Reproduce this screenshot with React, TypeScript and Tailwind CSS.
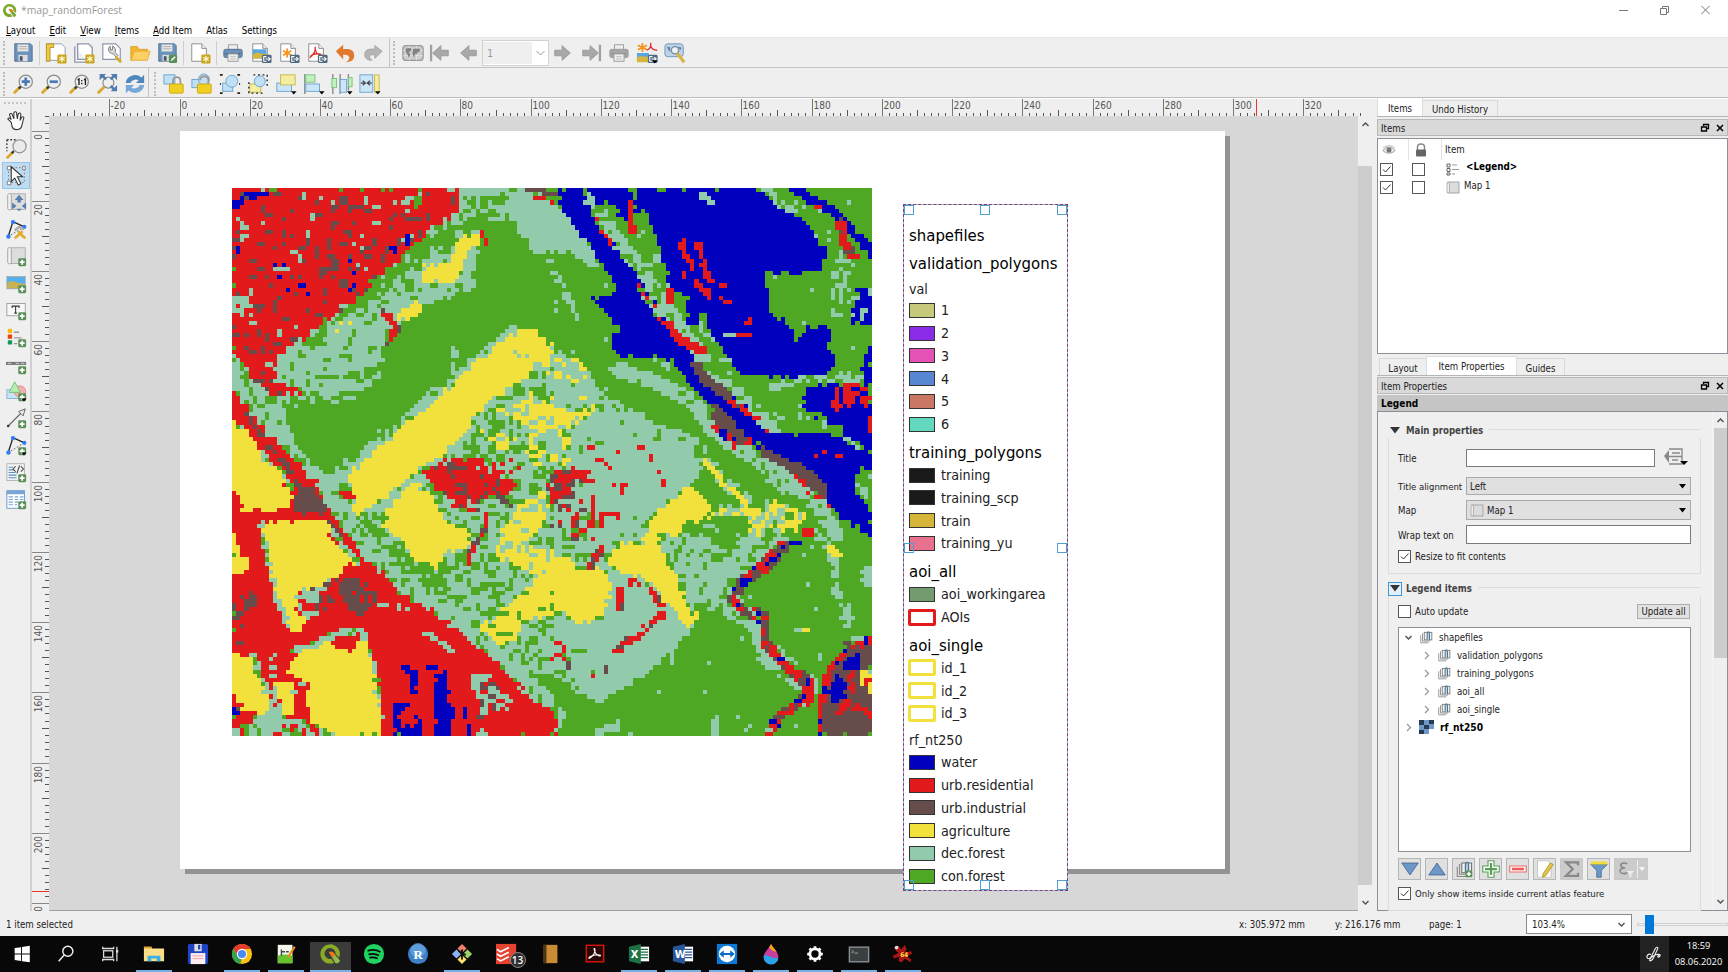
import React, { useMemo } from "react";
import type { ReactNode } from "react";

/* ---------- land cover raster ---------- */

const COLS = 155;
const ROWS = 132;
const CELL_X = 1920 / COLS;
const CELL_Y = 1535 / ROWS;

const COVER: Record<string, string> = {
  b: "#0000be",
  r: "#e31a1c",
  i: "#664d4b",
  y: "#f2e03d",
  d: "#92cbab",
  g: "#4ea823",
};

// [kind, x offset, class mix, points, line width]
type Region = ["area" | "line", number, string, number[], number?];

const E = 975;
const REGIONS: Region[] = [
  // north-west
  ["area", 0, "dddddgd", [21, 470, 150, 480, 480, 320, 640, 120, 700, 22, 850, 22, 850, 60, 780, 140, 745, 310, 600, 350, 470, 440, 470, 520, 400, 560, 360, 610, 270, 590, 230, 620, 170, 630, 210, 720, 250, 840, 300, 860, 280, 880, 200, 800, 100, 690, 21, 570]],
  ["area", 0, "ggggggd", [430, 290, 560, 190, 650, 130, 740, 110, 790, 130, 700, 170, 620, 200, 580, 250, 520, 260, 440, 340]],
  ["area", 0, "gggd", [720, 40, 835, 40, 850, 90, 780, 150, 740, 90]],
  ["line", 0, "gggd", [270, 548, 360, 548, 420, 540], 14],
  ["line", 0, "gd", [470, 350, 540, 290, 600, 300], 24],
  ["line", 0, "gggd", [230, 470, 320, 400, 390, 350], 16],
  ["area", 0, "g", [850, 100, 890, 140, 970, 250, 1010, 430, 960, 440, 900, 400, 800, 470, 700, 560, 600, 590, 540, 640, 400, 730, 330, 790, 260, 820, 200, 720, 170, 620, 350, 610, 480, 500, 590, 370, 740, 320, 760, 140]],
  ["line", 0, "dddg", [690, 470, 680, 550], 18],
  ["line", 0, "ddg", [740, 260, 720, 300, 640, 330], 14],
  ["line", 0, "gggd", [190, 620, 350, 620, 470, 540], 26],
  ["area", 0, "rrrrrrrrrrrrrrrrriird", [21, 22, 705, 22, 695, 90, 640, 125, 560, 190, 500, 240, 430, 300, 380, 350, 300, 400, 220, 455, 155, 490, 150, 570, 220, 585, 215, 600, 140, 600, 75, 560, 60, 520, 21, 490]],
  ["area", 0, "rrrrrri", [340, 60, 400, 60, 380, 220, 300, 260, 230, 240]],
  ["area", 0, "rrrrrrib", [200, 260, 420, 240, 400, 320, 240, 330, 130, 280]],
  ["area", 0, "rrrrrddi", [21, 100, 60, 110, 70, 170, 21, 180]],
  ["area", 0, "dddr", [21, 320, 80, 330, 80, 375, 21, 370]],
  ["line", 0, "i", [320, 210, 340, 240, 290, 255], 18],
  ["line", 0, "b", [21, 75, 70, 45, 120, 40], 16],
  ["line", 0, "i", [50, 40, 65, 50], 14],
  ["line", 0, "b", [345, 228, 370, 228], 9],
  ["line", 0, "b", [495, 190, 515, 200], 12],
  ["line", 0, "b", [550, 155, 550, 175], 10],
  ["line", 0, "b", [40, 190, 40, 210], 10],
  ["line", 0, "b", [148, 240, 172, 240], 9],
  ["line", 0, "b", [222, 298, 245, 298], 9],
  ["area", 0, "dddgr", [515, 60, 590, 40, 590, 70, 540, 85]],
  ["area", 0, "y", [690, 165, 765, 150, 765, 185, 722, 200, 715, 250, 690, 285, 640, 290, 582, 285, 600, 240, 680, 225, 690, 190]],
  ["area", 0, "y", [515, 385, 570, 340, 605, 345, 550, 397]],
  ["area", 0, "yyd", [320, 405, 380, 395, 350, 430]],
  ["line", 0, "rrri", [480, 370, 520, 410, 485, 460], 18],
  ["line", 0, "r", [772, 145, 785, 180], 12],
  // north-centre
  ["area", 0, "d", [835, 22, 910, 22, 975, 60, 1060, 130, 1115, 220, 1130, 265, 1060, 210, 980, 200, 930, 210, 880, 140, 850, 100]],
  ["line", 0, "r", [935, 50, 980, 60], 14],
  ["line", 0, "i", [905, 24, 995, 40], 14],
  ["line", E, "dddg", [0, 230, 60, 340, 85, 380], 20],
  // central mixed ground
  ["area", 0, "dddgg", [280, 850, 380, 780, 590, 800, 740, 660, 860, 580, 960, 480, 1060, 500, 1180, 620, 1300, 680, 1300, 950, 1350, 1350, 1100, 1440, 870, 1360, 700, 1270, 600, 1190, 520, 1130, 400, 1020, 320, 930]],
  ["line", 0, "dddg", [860, 425, 740, 520, 610, 615, 500, 710, 390, 790, 340, 890], 34],
  ["line", 0, "ddddg", [740, 700, 610, 830, 480, 900, 400, 960], 36],
  ["area", 0, "y", [910, 408, 985, 470, 1000, 530, 930, 510, 900, 560, 840, 590, 740, 660, 740, 690, 650, 775, 585, 810, 480, 885, 420, 925, 390, 955, 370, 940, 395, 890, 368, 830, 410, 795, 540, 685, 620, 625, 730, 535, 800, 480, 830, 445]],
  ["area", 0, "dy", [830, 480, 930, 480, 900, 500]],
  ["area", 0, "gggd", [380, 960, 440, 940, 480, 1000, 545, 1010, 560, 1080, 660, 1090, 670, 1150, 560, 1150, 470, 1100, 410, 1030]],
  ["area", 0, "y", [500, 900, 560, 850, 600, 865, 650, 930, 660, 960, 740, 990, 725, 1030, 660, 1045, 640, 1090, 600, 1070, 555, 1060, 540, 1010, 470, 970]],
  ["area", 0, "rrrrrrri", [580, 818, 670, 785, 780, 785, 790, 820, 870, 830, 870, 870, 820, 890, 740, 900, 720, 915, 660, 890, 625, 850]],
  ["area", 0, "ddddr", [720, 800, 870, 780, 880, 825, 790, 815]],
  ["line", 0, "ii", [670, 800, 715, 810], 20],
  ["line", 0, "i", [800, 860, 820, 885, 860, 910], 14],
  ["line", 0, "ir", [690, 912, 760, 925], 12],
  ["line", 0, "ir", [790, 920, 780, 980, 750, 1020, 730, 1070], 14],
  ["line", 0, "r", [325, 885, 380, 885], 22],
  ["area", 0, "yyyyd", [865, 920, 960, 860, 965, 940, 910, 1020, 990, 1040, 990, 1090, 930, 1110, 850, 1070, 805, 1040]],
  ["area", 0, "yyyyyyyyg", [905, 1140, 1000, 1080, 1000, 1215, 900, 1230, 870, 1290, 800, 1310, 745, 1290, 760, 1250, 840, 1200]],
  ["area", 0, "yyyd", [820, 650, 920, 600, 990, 640, 1140, 650, 1120, 688, 1000, 690, 880, 685]],
  ["area", 0, "yydgg", [760, 700, 870, 710, 850, 760, 800, 740]],
  ["area", 0, "ydgd", [900, 690, 1040, 690, 1040, 790, 900, 800]],
  ["area", E, "dddddgy", [0, 470, 100, 510, 180, 620, 160, 640, 0, 630]],
  ["area", E, "ddddddddddddddddddg", [160, 645, 230, 640, 320, 680, 440, 720, 460, 780, 430, 850, 340, 910, 280, 970, 220, 1020, 160, 1050, 60, 1040, 40, 950, 60, 690]],
  ["area", E, "ddddddddddddddrdddddr", [100, 740, 380, 730, 340, 880, 120, 980]],
  ["area", E, "rrri", [0, 815, 60, 805, 125, 820, 110, 845, 50, 850, 80, 890, 0, 900]],
  ["area", E, "dddrrig", [0, 890, 110, 900, 190, 940, 120, 1005, 0, 1010]],
  ["area", E, "y", [0, 1055, 60, 1060, 80, 1090, 160, 1090, 190, 1140, 165, 1200, 130, 1230, 100, 1250, 75, 1250, 70, 1220, 0, 1200]],
  ["area", E, "d", [200, 1100, 260, 1105, 350, 1170, 430, 1240, 420, 1270, 350, 1330, 240, 1410, 150, 1460, 80, 1430, 50, 1380, 10, 1300, 20, 1220, 70, 1240, 150, 1240]],
  ["area", E, "ddddgri", [0, 1270, 100, 1310, 190, 1360, 130, 1390, 40, 1370, 0, 1340]],
  ["area", E, "dddg", [340, 990, 640, 990, 640, 1060, 540, 1140, 530, 1200, 430, 1200, 380, 1100, 330, 1040]],
  ["area", E, "gggd", [460, 960, 560, 1000, 540, 1060, 470, 1050]],
  ["area", E, "y", [400, 855, 440, 870, 480, 910, 485, 940, 450, 960, 410, 945, 380, 1000, 330, 980, 335, 1050, 380, 1110, 400, 1160, 420, 1210, 460, 1215, 415, 1255, 390, 1230, 320, 1140, 270, 1110, 200, 1100, 165, 1060, 225, 1010, 280, 1030, 290, 970, 340, 910, 390, 890]],
  ["area", E, "g", [440, 720, 620, 780, 780, 900, 700, 890, 600, 880, 530, 840, 470, 790]],
  ["line", E, "dddg", [450, 760, 520, 840, 590, 895], 34],
  ["line", E, "y", [465, 785, 520, 850, 595, 905], 14],
  ["area", E, "yyyddg", [500, 915, 600, 910, 690, 900, 780, 940, 740, 985, 600, 990, 590, 940, 510, 945]],
  ["line", E, "rrri", [215, 1145, 210, 1190], 22],
  ["line", E, "r", [240, 1125, 270, 1130], 12],
  ["line", E, "rrri", [305, 1150, 345, 1205], 20],
  ["line", E, "rrrrid", [345, 1205, 280, 1260, 200, 1315], 24],
  ["line", E, "ri", [120, 1080, 155, 1035], 24],
  // river banks and river
  ["line", E, "dddg", [90, 22, 180, 150, 270, 260, 370, 400, 450, 500], 60],
  ["line", E, "dddddg", [200, 530, 330, 570, 430, 620, 490, 700, 600, 770, 700, 830, 800, 910, 860, 990], 44],
  ["area", E, "dddddg", [640, 780, 700, 790, 790, 900, 760, 900, 640, 840]],
  ["line", E, "dddg", [480, 560, 560, 600, 670, 700], 40],
  ["area", E, "b", [18, 22, 80, 22, 130, 90, 200, 190, 300, 330, 380, 430, 450, 530, 560, 610, 660, 710, 760, 710, 860, 715, 930, 750, 920, 870, 966, 920, 966, 1000, 880, 950, 820, 880, 740, 800, 640, 750, 560, 720, 480, 640, 410, 560, 370, 510, 320, 500, 200, 495, 180, 450, 210, 410, 140, 350, 130, 325, 195, 330, 190, 290, 110, 170, 30, 80]],
  ["area", E, "dddg", [300, 495, 340, 490, 370, 530, 320, 525]],
  ["line", E, "i", [440, 520, 470, 560, 540, 605], 28],
  ["area", E, "i", [485, 635, 530, 640, 560, 690, 610, 745, 560, 730, 500, 690]],
  ["line", E, "i", [640, 760, 720, 800], 24],
  ["area", E, "i", [700, 780, 760, 800, 830, 860, 830, 900, 770, 850, 730, 830]],
  ["line", E, "rri", [545, 620, 600, 660], 16],
  ["line", E, "rrd", [600, 655, 655, 700], 14],
  ["line", E, "rrib", [490, 690, 560, 740, 600, 735], 20],
  ["line", E, "rrd", [740, 830, 800, 890, 835, 910], 14],
  ["line", E, "rg", [125, 90, 180, 175], 14],
  ["line", E, "rdg", [265, 300, 330, 380], 16],
  // lake
  ["area", E, "b", [110, 22, 245, 22, 240, 110, 200, 100, 200, 62, 150, 62]],
  ["area", E, "b", [250, 22, 655, 22, 700, 80, 770, 105, 790, 160, 830, 190, 820, 250, 740, 265, 620, 260, 660, 310, 660, 370, 710, 400, 740, 450, 780, 410, 840, 410, 830, 460, 860, 520, 800, 545, 660, 550, 550, 530, 530, 480, 480, 430, 410, 400, 410, 330, 350, 290, 340, 200, 310, 140, 290, 80, 255, 90]],
  ["area", E, "gggd", [260, 110, 300, 150, 340, 210, 330, 250, 260, 190]],
  ["line", E, "ddg", [650, 30, 710, 75, 760, 80], 26],
  ["line", E, "d", [455, 45, 490, 65], 18],
  ["line", E, "r", [400, 175, 400, 205], 22],
  ["line", E, "r", [440, 180, 455, 205], 18],
  ["line", E, "rrb", [410, 215, 430, 240, 405, 268], 16],
  ["line", E, "r", [460, 238, 475, 275], 22],
  ["line", E, "rrb", [440, 290, 475, 320], 20],
  ["line", E, "rrb", [485, 285, 545, 310], 14],
  ["line", E, "r", [515, 332, 540, 345], 14],
  ["line", E, "rrb", [605, 388, 590, 405], 18],
  ["line", E, "rr", [560, 430, 605, 440], 16],
  ["line", E, "d", [530, 435, 548, 430], 16],
  ["line", E, "rrrd", [355, 300, 355, 340], 26],
  ["line", E, "r", [350, 400, 395, 450, 465, 480], 26],
  ["line", E, "r", [240, 70, 248, 140], 18],
  ["line", E, "ggd", [455, 380, 470, 440, 530, 510], 26],
  ["line", E, "b", [735, 25, 850, 90, 966, 200], 26],
  ["area", E, "gggd", [760, 110, 740, 80, 850, 110, 870, 180, 820, 190]],
  ["line", E, "rrri", [875, 125, 880, 170, 910, 215], 30],
  ["line", E, "r", [790, 68, 815, 78], 12],
  ["area", E, "ddgg", [840, 240, 870, 200, 920, 230, 880, 300, 880, 380, 850, 370]],
  ["area", E, "bbbbbd", [905, 305, 966, 300, 966, 405, 905, 400]],
  ["line", E, "dg", [880, 280, 920, 330, 850, 380], 22],
  ["area", E, "b", [945, 480, 966, 470, 966, 600, 930, 560]],
  ["line", E, "dddg", [670, 580, 780, 555, 930, 555], 26],
  ["area", E, "b", [765, 590, 860, 570, 966, 580, 966, 860, 925, 860, 920, 760, 870, 690, 760, 640]],
  ["area", E, "gggggd", [680, 640, 760, 655, 870, 690, 860, 715, 760, 705, 700, 715]],
  ["line", E, "dddg", [880, 720, 925, 745], 18],
  ["area", E, "rrrrb", [845, 590, 890, 562, 966, 585, 966, 640, 930, 615, 880, 640, 850, 640]],
  ["area", E, "r", [935, 680, 966, 655, 966, 705]],
  ["area", E, "bbbbbrbb", [770, 740, 850, 740, 890, 800, 800, 790]],
  ["area", E, "gggd", [922, 800, 966, 820, 966, 890, 922, 885]],
  // east
  ["line", E, "r", [765, 990, 800, 985], 24],
  ["line", E, "ddg", [800, 990, 850, 1050, 850, 1130, 900, 1230, 925, 1290], 26],
  ["line", E, "yyd", [835, 1030, 870, 1050], 20],
  ["area", E, "d", [935, 1080, 966, 1080, 966, 1145, 935, 1140]],
  ["line", E, "dddg", [690, 1020, 560, 1115, 540, 1190, 630, 1260, 640, 1330, 780, 1420], 54],
  ["line", E, "iiirrrb", [705, 1025, 640, 1085, 570, 1130, 550, 1180, 590, 1205, 640, 1225, 650, 1300, 720, 1365, 775, 1410, 765, 1460], 34],
  ["line", E, "rrribd", [760, 1460, 700, 1490, 655, 1550], 30],
  ["line", E, "r", [790, 1400, 790, 1460], 12],
  ["line", E, "dg", [560, 1160, 620, 1225], 10],
  ["line", E, "gd", [680, 1310, 750, 1370], 10],
  ["line", E, "b", [720, 1018, 745, 1018], 12],
  ["area", E, "i", [808, 1450, 850, 1360, 890, 1300, 966, 1290, 966, 1557, 808, 1557]],
  ["area", E, "ryyd", [925, 1370, 966, 1360, 966, 1430, 925, 1425]],
  ["area", E, "b", [820, 1430, 860, 1385, 895, 1400, 890, 1445, 860, 1465]],
  ["area", E, "b", [895, 1325, 925, 1330, 925, 1378, 870, 1372]],
  ["line", E, "rrrrib", [813, 1557, 815, 1450, 840, 1365, 900, 1310, 966, 1290], 18],
  ["line", E, "rrri", [905, 1380, 905, 1440, 870, 1490], 22],
  ["line", E, "rri", [920, 1480, 966, 1500], 22],
  ["line", E, "d", [150, 1545, 200, 1530], 24],
  ["line", E, "d", [497, 1510, 497, 1557], 22],
  ["line", E, "yyd", [740, 1260, 770, 1262], 12],
  // south-west
  ["line", 0, "ddddg", [30, 560, 110, 660, 230, 800, 330, 900, 420, 1020, 540, 1130, 650, 1200, 790, 1310, 900, 1400, 1000, 1510], 56],
  ["area", 0, "r", [21, 580, 100, 680, 270, 845, 330, 950, 420, 1060, 520, 1150, 640, 1220, 780, 1320, 900, 1430, 1000, 1510, 1000, 1557, 21, 1557]],
  ["line", 0, "ddgr", [40, 690, 110, 770, 200, 860], 18],
  ["area", 0, "y", [21, 665, 60, 700, 110, 775, 150, 810, 190, 860, 205, 910, 140, 925, 60, 930, 40, 880, 21, 850]],
  ["line", 0, "iir", [50, 640, 120, 730, 200, 820, 230, 880], 14],
  ["area", 0, "iiiiiir", [210, 850, 265, 865, 300, 910, 290, 938, 210, 935]],
  ["line", 0, "iir", [290, 930, 330, 980, 380, 1040], 14],
  ["line", 0, "dddg", [110, 960, 160, 1180, 200, 1260], 20],
  ["line", 0, "dddg", [320, 980, 395, 1070], 18],
  ["area", 0, "y", [110, 960, 300, 948, 320, 1000, 385, 1070, 350, 1100, 270, 1140, 240, 1170, 180, 1200, 155, 1150, 130, 1040]],
  ["area", 0, "y", [21, 990, 75, 1080, 60, 1100, 21, 1100]],
  ["area", 0, "dddri", [215, 1160, 350, 1105, 340, 1180, 280, 1215, 240, 1230, 205, 1195]],
  ["line", 0, "rrri", [290, 1190, 340, 1130], 34],
  ["area", 0, "y", [172, 1190, 205, 1190, 240, 1230, 225, 1262, 200, 1260]],
  ["area", 0, "iiiiir", [345, 1115, 400, 1110, 450, 1160, 440, 1190, 410, 1220, 385, 1215, 345, 1170]],
  ["line", 0, "ddr", [460, 1190, 550, 1200], 14],
  ["area", 0, "rrrrrri", [21, 1140, 130, 1120, 140, 1250, 60, 1290, 21, 1320]],
  ["line", 0, "dddg", [200, 1320, 330, 1275, 410, 1260, 440, 1350, 465, 1500], 20],
  ["area", 0, "y", [180, 1370, 230, 1320, 320, 1285, 350, 1315, 385, 1322, 402, 1275, 425, 1300, 445, 1380, 460, 1460, 466, 1557, 330, 1557, 250, 1510, 245, 1400, 200, 1395]],
  ["line", 0, "ddg", [80, 1330, 120, 1420, 140, 1500], 18],
  ["area", 0, "y", [21, 1330, 80, 1335, 100, 1400, 135, 1460, 130, 1500, 60, 1490, 21, 1430]],
  ["line", 0, "dddr", [150, 1340, 150, 1490, 230, 1410], 22],
  ["area", 0, "y", [155, 1400, 205, 1400, 205, 1500, 170, 1490, 160, 1450]],
  ["area", 0, "dddgr", [40, 1510, 150, 1490, 250, 1520, 320, 1540, 350, 1557, 21, 1557]],
  ["line", 0, "bbi", [22, 1488, 45, 1488], 18],
  ["area", 0, "b", [525, 1362, 560, 1365, 582, 1385, 578, 1440, 558, 1440, 555, 1385, 535, 1385]],
  ["area", 0, "b", [505, 1465, 560, 1465, 540, 1490, 518, 1500, 518, 1530, 570, 1530, 575, 1500, 590, 1500, 592, 1557, 495, 1557, 510, 1530]],
  ["area", 0, "b", [603, 1350, 640, 1350, 640, 1383, 665, 1383, 665, 1465, 680, 1470, 680, 1557, 630, 1557, 630, 1390, 612, 1365]],
  ["line", 0, "b", [724, 1480, 724, 1515], 12],
  ["line", 0, "b", [732, 1525, 732, 1557], 14],
  ["area", 0, "dddddri", [730, 1385, 790, 1380, 860, 1450, 850, 1480, 790, 1475, 785, 1557, 760, 1557, 755, 1440]],
  ["line", 0, "dddr", [600, 1270, 650, 1290, 680, 1320], 14],
];

const hash = (x: number, y: number, s: number) => {
  let h = Math.imul(x + 11, 374761393) ^ Math.imul(y + 7, 668265263) ^ Math.imul(s + 3, 1274126177);
  h = Math.imul(h ^ (h >>> 13), 1274126177);
  h ^= h >>> 16;
  h = Math.imul(h, 2246822507);
  return ((h ^ (h >>> 15)) >>> 0) / 4294967296;
};

const inside = (x: number, y: number, off: number, p: number[]) => {
  let hit = false;
  for (let i = 0, j = p.length - 2; i < p.length; j = i, i += 2) {
    const yi = p[i + 1], yj = p[j + 1];
    const xi = p[i] + off, xj = p[j] + off;
    if (yi > y !== yj > y && x < ((xj - xi) * (y - yi)) / (yj - yi) + xi) hit = !hit;
  }
  return hit;
};

const near = (x: number, y: number, off: number, p: number[], w: number) => {
  for (let i = 0; i + 3 < p.length; i += 2) {
    const ax = p[i] + off, ay = p[i + 1];
    const dx = p[i + 2] + off - ax, dy = p[i + 3] - ay;
    const t = Math.max(0, Math.min(1, ((x - ax) * dx + (y - ay) * dy) / (dx * dx + dy * dy)));
    if (Math.hypot(x - ax - t * dx, y - ay - t * dy) < w / 2) return true;
  }
  return false;
};

function buildCover() {
  const grid: string[][] = [];
  for (let r = 0; r < ROWS; r++) {
    const row: string[] = [];
    for (let c = 0; c < COLS; c++) {
      let v = hash(c, r, 91) < 0.012 ? "d" : "g";
      const jx = (hash(c, r, 1) - 0.5) * 16;
      const jy = (hash(c, r, 2) - 0.5) * 16;
      const x = 21 + (c + 0.5) * CELL_X;
      const y = 22 + (r + 0.5) * CELL_Y;
      REGIONS.forEach(([kind, off, mix, pts, w], k) => {
        const sharp = kind === "line" ? 0.35 : 1;
        const px = x + jx * sharp, py = y + jy * sharp;
        const hit = kind === "area" ? inside(px, py, off, pts) : near(px, py, off, pts, w ?? 12);
        if (!hit) return;
        const pick = hash(c >> 1, r >> 1, 5);
        const n = pick < 0.4 ? hash(c >> 1, r, k) : pick < 0.7 ? hash(c, r >> 1, k + 40) : hash(c, r, k + 80);
        v = mix[Math.floor(n * mix.length)];
      });
      row.push(v);
    }
    grid.push(row);
  }
  const paths: Record<string, string> = {};
  grid.forEach((row, r) => {
    for (let c = 0; c < COLS; ) {
      let e = c + 1;
      while (e < COLS && row[e] === row[c]) e++;
      paths[row[c]] = (paths[row[c]] ?? "") + `M${c} ${r}h${e - c}v1h${c - e}z`;
      c = e;
    }
  });
  return paths;
}

function CoverMap() {
  const paths = useMemo(buildCover, []);
  return (
    <svg className="absolute left-[183px] top-[72px] h-[548px] w-[640px]" viewBox={`0 0 ${COLS} ${ROWS}`} preserveAspectRatio="none" shapeRendering="crispEdges">
      <rect width={COLS} height={ROWS} fill={COVER.g} />
      {Object.entries(paths).map(([k, d]) => (
        <path key={k} d={d} fill={COVER[k]} />
      ))}
    </svg>
  );
}

/* ---------- icons ---------- */

const Svg = ({ children, s = 22 }: { children: ReactNode; s?: number }) => (
  <svg width={s} height={s} viewBox="0 0 24 24" fill="none" className="shrink-0">{children}</svg>
);
const PlusBadge = () => (
  <g><rect x="14" y="14" width="9" height="9" rx="1.5" fill="#5a9058" /><path d="M18.5 15.7v5.6M15.7 18.5h5.6" stroke="#fff" strokeWidth="2" /></g>
);
const StarBadge = () => (
  <g><rect x="13.5" y="13.5" width="10" height="10" rx="1.5" fill="#c9a41d" /><path d="M18.5 15v7M15.5 16.7l6 3.6M21.5 16.7l-6 3.6" stroke="#fff8d0" strokeWidth="1.3" /></g>
);
const OutBadge = () => (
  <g><rect x="13" y="14" width="10.5" height="9" rx="1.5" fill="#4d6a80" /><path d="M18 16h-3v5h3M17 18.5h5M20 16.5l2 2-2 2" stroke="#fff" strokeWidth="1.2" /></g>
);
const DropMark = () => <path d="M17.5 20h6l-3 3.4z" fill="#000" />;
const Floppy = ({ edit = false }: { edit?: boolean }) => (
  <Svg>
    <path d="M3 2h17l2 2v17H3z" fill="#6b93bd" stroke="#4e6f92" />
    <rect x="6" y="2.5" width="12" height="8" fill="#e8e8e8" stroke="#8aa" strokeWidth=".5" /><path d="M7.500 5h9M7.500 7.500h9" stroke="#aaa" />
    <rect x="7" y="14" width="10" height="7" fill="#ddd" /><rect x="8.500" y="15.500" width="3" height="5" fill="#456" />
    {edit && <g><rect x="14" y="14" width="9" height="9" rx="1.500" fill="#5a9058" /><path d="M16 21l1-2.500 3.500-3 1 1-3.500 3.500z" fill="#fff" /></g>}
  </Svg>
);
const Page = ({ children }: { children?: ReactNode }) => (
  <Svg><path d="M3 2h11l5 5v14H3z" fill="#fff" stroke="#8a8a8a" /><path d="M14 2v5h5" fill="#eee" stroke="#8a8a8a" />{children}</Svg>
);
const Printer = ({ gray = false }: { gray?: boolean }) => (
  <Svg>
    <rect x="7" y="3" width="10" height="7" fill="#eee" stroke="#999" />
    <rect x="2" y="8" width="20" height="9" rx="2" fill={gray ? "#a5a5a5" : "#6b8fb8"} stroke={gray ? "#999" : "#51708f"} />
    <path d="M4 13h16" stroke={gray ? "#888" : "#34495e"} /><rect x="6.500" y="13" width="11" height="8" fill="#eee" stroke="#999" /><path d="M9 16h6M9 18.500h6" stroke="#bbb" />
  </Svg>
);
const Arrow = ({ flip = false, bar = false }: { flip?: boolean; bar?: boolean }) => (
  <Svg><g transform={flip ? "translate(24 0) scale(-1 1)" : undefined}><path d="M4 12l9-8v5h8v6h-8v5z" fill="#a8a8a8" stroke="#999" />{bar && <rect x="1" y="3" width="2.500" height="18" fill="#a0a0a0" />}</g></Svg>
);
const Lens = ({ children, x = 15 }: { children?: ReactNode; x?: number }) => (
  <Svg><path d="M2 22l7-7" stroke="#d9aa2b" strokeWidth="3.200" /><path d="M7.500 17l2.500-2.500" stroke="#333" strokeWidth="2.500" /><circle cx={x} cy="9.500" r="7.200" fill="#efefef" stroke="#8c8c8c" strokeWidth="1.300" />{children}</Svg>
);
const Globe = () => (
  <g><rect x="1" y="4" width="22" height="16" rx="3.500" fill="#ccc" stroke="#9a9a9a" strokeWidth="1.500" /><path d="M1 9h22M1 15h22M8 4v16M16 4v16" stroke="#eee" strokeWidth=".7" /><path d="M4 7l5-.5 1.500 2-3 3 1.500 2-1.500 4-1.500-4-2-3zM12 8l3-1 5 .5-1 3-2 1-1.500 2-1-1-1.500 5-1.500-5z" fill="#828282" /></g>
);
const Scroll = () => <g><rect x="5" y="2" width="17" height="18" fill="#ddd" stroke="#aaa" /><path d="M2 4c0-3 4-3 4 0v15c0 2-4 2-4 0z" fill="#f4f4f4" stroke="#999" /></g>;
const NodeShape = () => (
  <g><path d="M2.500 20L8 3l13 6" stroke="#222" strokeWidth="1.500" /><path d="M21 9L2.500 20" stroke="#555" strokeDasharray="2 2" /><circle cx="8" cy="3.500" r="2.500" fill="#2b7cf5" /><circle cx="21" cy="9" r="2.300" fill="#2b7cf5" /><circle cx="2.800" cy="20" r="2.500" fill="#2b7cf5" /></g>
);
const Layers = ({ s = 14, plus = false }: { s?: number; plus?: boolean }) => (
  <Svg s={s}><path d="M3 9v13h13M7 6h-1v13h13" stroke="#8a8a8a" strokeWidth="1.500" /><rect x="9" y="4" width="13" height="13" fill="#f2f2f2" stroke="#777" strokeWidth="1.500" /><path d="M14 17V7c0-5 4-5 4 0v10" stroke="#4d738f" strokeWidth="1.800" fill="#c9d9e4" />{plus && <PlusBadge />}</Svg>
);
const MapGlyph = () => (
  <svg width="14" height="13" viewBox="0 0 14 13" className="shrink-0"><rect x="2" y="1" width="11" height="11" fill="#dcdcdc" stroke="#a5a5a5" /><path d="M1 1.500h2.500v10H1z" fill="#eee" stroke="#b5b5b5" /></svg>
);
const PageBack = () => <path d="M2 2h16l4 4v14H4z" fill="#fff" stroke="#8c96ac" />;
const QLogo = ({ s = 14 }: { s?: number }) => (
  <Svg s={s}><path d="M12 1.500a10.500 10.500 0 1 0 4.500 20l-3-4.200A6 6 0 1 1 18 12l4 4A10.500 10.500 0 0 0 12 1.500z" fill="#7fa82e" /><path d="M11 10h4l8 9-2 3h-3z" fill="#76ad3a" /><path d="M10.500 9.500h4.500l3 3.500-3.500 2.500z" fill="#ee7913" /></Svg>
);

const Cell = ({ children }: { children: ReactNode }) => <div className="flex w-[27.9px] shrink-0 items-center justify-center">{children}</div>;
const Sep = () => <div className="mx-[2px] h-[24px] w-px shrink-0 bg-[#cfcfcf]" />;
const Grip = () => <div className="ml-[3px] mr-[4px] h-[24px] w-0 shrink-0 border-l-2 border-dotted border-[#bdbdbd]" />;

function FileTools() {
  return (
    <div className="flex h-[30px] items-center border-b border-[#c4c4c4]">
      <Grip />
      <Cell><Floppy /></Cell>
      <Sep />
      <Cell><Svg><PageBack /><path d="M1.500 2h8v4h-4v15h-4z" fill="#eccb4a" stroke="#b58e19" /><StarBadge /></Svg></Cell>
      <Cell><Svg><path d="M2 5v17h15M5 2h12l4 4v13H5z" fill="#fff" stroke="#8c96ac" strokeWidth="1.500" /><StarBadge /></Svg></Cell>
      <Cell><Svg><path d="M2 2h14l5 5v12H2z" fill="#fff" stroke="#8c96ac" strokeWidth="1.300" /><path d="M10 4.500a4.500 4.500 0 0 0 1.500 8l2 .5 3 3.500 2-2-3-3c.8-4-.5-6.500-3-7v4l-2 .5z" fill="#ddd" stroke="#777" /><path d="M16 16l6 6" stroke="#d6ac2c" strokeWidth="3" /></Svg></Cell>
      <Cell><Svg><path d="M2 20V5h7l2 3h9v4" fill="#f2b52e" stroke="#dca325" /><path d="M2 20L6 10h17l-3 10z" fill="#fbd064" stroke="#e5af3e" /></Svg></Cell>
      <Cell><Floppy edit /></Cell>
      <Sep />
      <Cell><Page><StarBadge /></Page></Cell>
      <Sep />
      <Cell><Printer /></Cell>
      <Cell><Page><rect x="3" y="8" width="15" height="10" fill="#5aa6e0" /><path d="M3 18v-4c5-5 9 0 15-1v5z" fill="#d6b63c" /><OutBadge /></Page></Cell>
      <Cell><Page><path d="M10 7v10M5.500 9.500l9 5M14.500 9.500l-9 5" stroke="#f7941d" strokeWidth="2" /><OutBadge /></Page></Cell>
      <Cell><Page><path d="M10 5c1 6-2 9-6 12M10 8c1 4 4 7 8 6M5 15c4-3 8-2 11-2" stroke="#e2302e" strokeWidth="1.500" /><OutBadge /></Page></Cell>
      <Cell><Svg><path d="M2 10l8-7v5c8-1 12 1 12 7 0 5-4 7-9 7 5-2 6-9-3-8v5z" fill="#e0792e" /></Svg></Cell>
      <Cell><Svg><path d="M22 10l-8-6v4c-8-1-11 1-11 6 0 4 3 6 8 6-4-3-4-7 3-6v4z" fill="#b5b5b5" stroke="#a5a5a5" /></Svg></Cell>
      <div className="ml-[2px] h-full w-px bg-[#c4c4c4]" />
      <Grip />
      <Cell><Svg><Globe /></Svg></Cell>
      <Cell><Arrow bar /></Cell>
      <Cell><Arrow /></Cell>
      <div className="flex h-[26px] w-[67px] shrink-0 items-center border border-[#d2d2d2] bg-white">
        <div className="h-[22px] w-[49px] bg-[#efefef] pl-[4px] text-[10px] leading-[24px] text-[#8a97a8]">1</div>
        <svg width="16" height="10" viewBox="0 0 16 10"><path d="M4.500 3l4 4 4-4" fill="none" stroke="#999" /></svg>
      </div>
      <Cell><Arrow flip /></Cell>
      <Cell><Arrow flip bar /></Cell>
      <Cell><Printer gray /></Cell>
      <Cell><Svg><path d="M7 1v10M2 3.500l10 5M12 3.500l-10 5" stroke="#f7941d" strokeWidth="2" /><path d="M16 1c1 5-2 7-4 8M16 4c1 4 4 5 7 5" stroke="#e2302e" strokeWidth="1.500" /><rect x="1" y="12" width="13" height="9" fill="#5aa6e0" /><path d="M1 22v-5c5-3 8 0 13-1v6z" fill="#d6b63c" /><OutBadge /><DropMark /></Svg></Cell>
      <Cell><Svg><rect x="1" y="2" width="20" height="14" rx="3" fill="#bdd3e8" stroke="#6f94ba" /><path d="M3 5l4 1-1 5zM15 5l4 1-1 3z" fill="#5d7ea3" /><circle cx="12" cy="9" r="4" fill="#eef3f8" stroke="#7b8894" strokeWidth="1.500" /><path d="M14.500 12.500L22 22" stroke="#d8b345" strokeWidth="3.500" /></Svg></Cell>
    </div>
  );
}

function ViewTools() {
  const dash = { stroke: "#222", strokeWidth: 1.5, strokeDasharray: "2 3" };
  return (
    <div className="flex h-[30px] items-center border-b border-[#bcbcbc] pt-[2px]">
      <Grip />
      <Cell><Lens><path d="M15 5v9M10.500 9.500h9" stroke="#4a7bb5" strokeWidth="3" /></Lens></Cell>
      <Cell><Lens><path d="M10.500 9.500h9" stroke="#4a7bb5" strokeWidth="3" /></Lens></Cell>
      <Cell><Lens><path d="M10.500 7.500l1.500-1v6.500M17.500 7.500l1.500-1v6.500M15 7.500v1.500M15 10.700v1.500" stroke="#222" strokeWidth="1.500" /></Lens></Cell>
      <Cell><Svg><path d="M2 22l7-7" stroke="#d9aa2b" strokeWidth="3.200" /><circle cx="13.500" cy="10.500" r="6" fill="#efefef" stroke="#8c8c8c" strokeWidth="1.300" /><path d="M4 1h7l-2 2 3 3-2 2-3-3-3 3zM23 1h-7l2 2-3 3 2 2 3-3 3 3zM23 20h-7l2-2-3-3 2-2 3 3 3-3z" fill="#4f7cae" /></Svg></Cell>
      <Cell><Svg><path d="M2 11a10 9 0 0 1 17-6l3-3v9h-9l3-3a6 5 0 0 0-9 3z" fill="#4f87bf" /><path d="M22 13a10 9 0 0 1-17 6l-3 3v-9h9l-3 3a6 5 0 0 0 9-3z" fill="#79a8d6" /></Svg></Cell>
      <div className="-mt-[2px] h-[31px] w-px bg-[#c4c4c4]" />
      <div className="ml-[5px] mr-[4px] h-[24px] w-0 shrink-0 border-l-2 border-dotted border-[#bdbdbd]" />
      <Cell><Svg><rect x="1" y="2" width="12" height="10" fill="#bfe0f5" stroke="#6ba3cc" /><path d="M11 13V9c0-6 8-6 8 0v4" stroke="#999" strokeWidth="2" /><rect x="7" y="12" width="15" height="10" rx="1" fill="#f0cf23" stroke="#cfa90c" /></Svg></Cell>
      <Cell><Svg><rect x="1" y="7" width="10" height="9" fill="#bfe0f5" stroke="#6ba3cc" /><circle cx="14" cy="7" r="6" fill="#bfe0f5" stroke="#6ba3cc" /><path d="M10 8c0-6 9-6 9 0v4" stroke="#999" strokeWidth="2" /><rect x="7" y="12" width="15" height="10" rx="1" fill="#f0cf23" stroke="#cfa90c" /></Svg></Cell>
      <Cell><Svg><rect x="4" y="11" width="11" height="9" fill="#bfe0f5" stroke="#6ba3cc" /><circle cx="14" cy="9" r="6.500" fill="#bfe0f5" stroke="#6ba3cc" /><path d="M1 2h3M1 22h3M20 2h3M20 22h3M1 12h1M22 12h1" stroke="#222" strokeWidth="2" /></Svg></Cell>
      <Cell><Svg><rect x="3" y="12" width="12" height="9" fill="#f5f0a0" stroke="#c5b94e" /><circle cx="14" cy="9" r="6" fill="#bfe0f5" stroke="#6ba3cc" /><path d="M2 10v12h16M7 2h15v14" {...dash} /></Svg></Cell>
      <Cell><Svg><rect x="2" y="11" width="16" height="9" fill="#cbe6f8" stroke="#6ba3cc" /><rect x="6" y="2" width="16" height="11" fill="#f4eda0" stroke="#c5b94e" /><DropMark /></Svg></Cell>
      <Cell><Svg><path d="M2 1v22" stroke="#888" strokeWidth="1.500" /><rect x="3" y="2" width="10" height="8" fill="#bff2bd" stroke="#7cc07a" /><rect x="3" y="12" width="15" height="8" fill="#cbe6f8" stroke="#6ba3cc" /><DropMark /></Svg></Cell>
      <Cell><Svg><path d="M2 1v22M10 1v22M19 1v18" stroke="#888" strokeWidth="1.500" /><rect x="1" y="6" width="5" height="10" fill="#bff2bd" stroke="#7cc07a" /><rect x="10" y="7" width="7" height="14" fill="#cbe6f8" stroke="#6ba3cc" /><rect x="19" y="5" width="4" height="10" fill="#bff2bd" stroke="#7cc07a" /><DropMark /></Svg></Cell>
      <Cell><Svg><rect x="1" y="2" width="14" height="19" fill="#cbe6f8" stroke="#6ba3cc" /><rect x="17" y="2" width="5" height="19" fill="#f4eda0" stroke="#c5b94e" /><path d="M2 11h4M4 8.500l3 2.500-3 2.500M14 11h-4M12 8.500L9 11l3 2.500" stroke="#444" strokeWidth="1.300" /><DropMark /></Svg></Cell>
    </div>
  );
}

const SIDE: ReactNode[] = [
  <path d="M6 13L2 9c1-2 3-1 4 1L4 4c1-2 3-1 3 0l2 5V2c1-2 3-1 3 0l1 7 1-6c1-1 3-1 3 1l-1 7 2-4c2-1 3 0 2 2l-2 8c-1 5-9 6-11 1z" fill="#fff" stroke="#333" strokeWidth="1.200" />,
  <g><path d="M1 2h10M1 2v13" stroke="#333" strokeDasharray="2 2" strokeWidth="1.500" /><path d="M1 23l7-7" stroke="#d9aa2b" strokeWidth="3.200" /><path d="M6.500 17.500L9 15" stroke="#333" strokeWidth="2.500" /><circle cx="15.500" cy="9.500" r="7.500" fill="#ebebeb" stroke="#8c8c8c" strokeWidth="1.300" /></g>,
  <g><path d="M3 3h18v17H3z" stroke="#666" strokeDasharray="1.500 2.500" /><path d="M1.500 1.500h4v4h-4zM19 1.500h3v4h-3zM1.500 18.500h4v4h-4z" fill="#fff" stroke="#777" /><path d="M6 2v17l4-4 4 8 3-1.500-4-8h6z" fill="#fff" stroke="#333" strokeWidth="1.200" /></g>,
  <g><Scroll /><path d="M15 3l5 6h-3v3h-4V9h-3zM7 12l5 4-5 4zM23 12l-5 4 5 4zM12 19h6l-3 3z" fill="#557fae" /></g>,
  <g><NodeShape /><path d="M10 13l5-4 6 3M14 14l8 8" stroke="#aaa" strokeWidth="2.500" /><path d="M10 22l9-8M14 15l8 7" stroke="#e3ad25" strokeWidth="2.800" /></g>,
  <g><Scroll /><PlusBadge /></g>,
  <g><rect x="1" y="4" width="21" height="14" fill="#55aef0" stroke="#aaa" /><path d="M1.500 17.500v-6c6-5 9 0 20 1v5z" fill="#c9b351" /><PlusBadge /></g>,
  <g><rect x="1" y="4" width="21" height="14" fill="#f8f8f8" stroke="#999" /><path d="M7 9V7h8v2M11 7v8M9.500 15h3" stroke="#333" strokeWidth="1.200" /><PlusBadge /></g>,
  <g><rect x="2" y="2" width="5" height="5" rx="1" fill="#fdb913" /><rect x="2" y="8.500" width="5" height="5" rx="1" fill="#e5440c" /><rect x="2" y="15" width="5" height="5" rx="1" fill="#14985b" /><path d="M9 6h6M9 12.500h9M9 19h4" stroke="#999" strokeWidth="1.500" /><PlusBadge /></g>,
  <g><rect x="0" y="9" width="23" height="3.500" fill="#777" /><path d="M2 10.700h4M11 10.700h4M17 10.700h4" stroke="#ddd" /><PlusBadge /></g>,
  <g><rect x="1" y="10" width="14" height="10" fill="#c8e5f8" stroke="#7fb0d3" /><circle cx="16" cy="12" r="6.500" fill="#f7b0b0" stroke="#d88" /><path d="M10 1l6.500 12h-13z" fill="#b5efb0" stroke="#73b86f" /><PlusBadge /><DropMark /></g>,
  <g><path d="M3 20L19 4" stroke="#666" strokeWidth="1.300" /><path d="M22 1l-2.500 8-5-5z" fill="#eee" stroke="#555" /><circle cx="2.500" cy="20.500" r="1.500" fill="#333" /><PlusBadge /></g>,
  <g><NodeShape /><PlusBadge /><DropMark /></g>,
  <g><rect x="1" y="2" width="20" height="19" fill="#f3f3f3" stroke="#aaa" /><path d="M3 6h5M3 9h6M3 12h8M3 15h9M3 18h9" stroke="#5b8fc4" strokeWidth="1.400" /><path d="M11 5l-3 3 3 3M17 5l3 3-3 3M15.500 4l-3 9" stroke="#444" strokeWidth="1.200" /><PlusBadge /></g>,
  <g><rect x="1" y="2" width="20" height="20" fill="#fff" stroke="#5b8fc4" /><rect x="1" y="2" width="20" height="4" fill="#7aa6d6" /><path d="M3 9h5M10 9h4M16 9h4M3 12h5M10 12h4M16 12h4M3 15h5M10 15h4M3 18h5M10 18h3" stroke="#7aa6d6" strokeWidth="1.400" /><PlusBadge /></g>,
];

/* ---------- rulers ---------- */

const MM = 3.512;

function RulerTop() {
  const marks: ReactNode[] = [];
  for (let v = -36; v <= 336; v += 2) {
    const x = 147.5 + v * MM;
    const big = v % 20 === 0;
    const mid = v % 10 === 0;
    marks.push(<path key={v} d={`M${Math.round(x) + 0.5} 17V${big ? 0 : mid ? 11 : 14}`} stroke={big ? "#777" : "#555"} />);
    if (big) marks.push(<text key={`t${v}`} x={Math.round(x) + 1.5} y="10" fontSize="10" fill="#555">{v}</text>);
  }
  return (
    <svg width="1340" height="17" className="block shrink-0 bg-[#efefef]">
      {marks}
      <path d="M1224.500 0V17" stroke="#e33" />
    </svg>
  );
}

function RulerSide() {
  const marks: ReactNode[] = [];
  for (let v = -4; v <= 220; v += 2) {
    const y = 14.5 + v * MM;
    const big = v % 20 === 0;
    const mid = v % 10 === 0;
    marks.push(<path key={v} d={`M17 ${Math.round(y) + 0.5}H${big ? 0 : mid ? 10 : 13}`} stroke={big ? "#888" : "#555"} />);
    if (big) marks.push(<text key={`t${v}`} transform={`translate(10 ${Math.round(y) + 3}) rotate(-90)`} textAnchor="end" fontSize="10" fill="#555">{v}</text>);
  }
  return (
    <svg width="17" height="795" className="block shrink-0 bg-[#efefef]">
      {marks}
      <path d="M0 775.500H17" stroke="#e33" />
    </svg>
  );
}

/* ---------- legend ---------- */

type LegendRow = { t: string; h: string; kind: "title" | "sub" | "item"; fill?: string; edge?: string };
const H = "h-[22.8px]";
const LEGEND: LegendRow[] = [
  { t: "shapefiles", h: "h-[28px] pt-[2px]", kind: "title" },
  { t: "validation_polygons", h: "h-[28px] pt-[2px]", kind: "title" },
  { t: "val", h: "h-[22px] pt-[2px]", kind: "sub" },
  { t: "1", h: H, kind: "item", fill: "#c7c97a" },
  { t: "2", h: H, kind: "item", fill: "#8a2be8" },
  { t: "3", h: H, kind: "item", fill: "#e552b5" },
  { t: "4", h: H, kind: "item", fill: "#5787d3" },
  { t: "5", h: H, kind: "item", fill: "#c97864" },
  { t: "6", h: H, kind: "item", fill: "#64d8bf" },
  { t: "training_polygons", h: "h-[28px] pt-[8px]", kind: "title" },
  { t: "training", h: H, kind: "item", fill: "#1a1a1a" },
  { t: "training_scp", h: H, kind: "item", fill: "#1a1a1a" },
  { t: "train", h: H, kind: "item", fill: "#d4b53a" },
  { t: "training_yu", h: H, kind: "item", fill: "#e8718d" },
  { t: "aoi_all", h: "h-[28px] pt-[7px]", kind: "title" },
  { t: "aoi_workingarea", h: H, kind: "item", fill: "#729b6f" },
  { t: "AOIs", h: H, kind: "item", edge: "#e31a1c" },
  { t: "aoi_single", h: "h-[28px] pt-[7px]", kind: "title" },
  { t: "id_1", h: H, kind: "item", edge: "#f2e03d" },
  { t: "id_2", h: H, kind: "item", edge: "#f2e03d" },
  { t: "id_3", h: H, kind: "item", edge: "#f2e03d" },
  { t: "rf_nt250", h: "h-[26px] pt-[5px]", kind: "sub" },
  { t: "water", h: H, kind: "item", fill: COVER.b },
  { t: "urb.residential", h: H, kind: "item", fill: COVER.r },
  { t: "urb.industrial", h: H, kind: "item", fill: COVER.i },
  { t: "agriculture", h: H, kind: "item", fill: COVER.y },
  { t: "dec.forest", h: H, kind: "item", fill: COVER.d },
  { t: "con.forest", h: H, kind: "item", fill: COVER.g },
];

const Handle = ({ at }: { at: string }) => <div className={`absolute size-[10px] border border-[#4f9fd0] ${at}`} />;

function LegendBox() {
  return (
    <div className="absolute left-[854px] top-[88px] h-[687px] w-[165px] border border-dashed border-[#8b3a6a] px-[6px] pt-[16px] text-[#222] [background:linear-gradient(#fff,#fff)_padding-box,#8fc4e4]">
      {LEGEND.map((r) => (
        <div key={r.t} className={`flex items-center whitespace-nowrap ${r.h}`}>
          {r.kind === "item" ? (
            <>
              {r.fill ? (
                <div className="-ml-px mr-[6px] h-[15px] w-[26px] border border-[#333]" style={{ background: r.fill }} />
              ) : (
                <div className="-ml-[2px] mr-[5px] h-[17px] w-[28px] rounded-[2px] border-3" style={{ borderColor: r.edge }} />
              )}
              <span className="text-[14.2px] leading-none">{r.t}</span>
            </>
          ) : (
            <span className={r.kind === "title" ? "-ml-px text-[16.6px] leading-none text-black" : "-ml-px text-[14.2px] leading-none"}>{r.t}</span>
          )}
        </div>
      ))}
      <Handle at="left-0 top-0" />
      <Handle at="left-[76px] top-0" />
      <Handle at="right-0 top-0" />
      <Handle at="left-0 top-[338px]" />
      <Handle at="right-0 top-[338px]" />
      <Handle at="left-0 bottom-0" />
      <Handle at="left-[76px] bottom-0" />
      <Handle at="right-0 bottom-0" />
    </div>
  );
}

/* ---------- right-hand docks ---------- */

const Check = ({ on = false }: { on?: boolean }) => (
  <svg width="13" height="13" viewBox="0 0 13 13" className="shrink-0"><rect x=".5" y=".5" width="12" height="12" fill="#fff" stroke="#555" />{on && <path d="M3 6.500l2.500 2.500L10.500 3.500" fill="none" stroke="#333" />}</svg>
);
const Chev = ({ up = false }: { up?: boolean }) => (
  <svg width="9" height="7" viewBox="0 0 9 7" className="shrink-0"><path d={up ? "M1.500 5l3-3 3 3" : "M1.500 2l3 3 3-3"} fill="none" stroke="#555" strokeWidth="1.500" /></svg>
);

function DockHeader({ title }: { title: string }) {
  return (
    <div className="flex h-[17px] items-center border border-[#b9b9b9] bg-[#d9d9d9] pl-[3px] pr-px">
      <span className="mr-auto pt-[2px]">{title}</span>
      <svg width="26" height="10" viewBox="0 0 26 10" fill="none" stroke="#000"><path d="M3.500 3V1.500h5v4H7M1.500 4h5v4h-5z" strokeWidth="1.300" /><path d="M17 2l6 6M23 2l-6 6" strokeWidth="1.500" /></svg>
    </div>
  );
}

const Combo = ({ children, h }: { children: ReactNode; h: string }) => (
  <div className={`flex w-[225px] items-center border border-[#a9a9a9] bg-[#e0e0e0] pl-[3px] pr-[4px] ${h}`}>
    {children}
    <svg width="7" height="5" viewBox="0 0 7 5" className="ml-auto"><path d="M0 0h7L3.500 4.500z" /></svg>
  </div>
);

function GroupTitle({ children, focus = false }: { children: ReactNode; focus?: boolean }) {
  return (
    <div className="flex h-[15px] items-center">
      <div className={`flex size-[14px] items-center justify-center border ${focus ? "border-[#3f97d9] bg-[#e3f0fa]" : "border-transparent"}`}>
        <svg width="10" height="7" viewBox="0 0 10 7"><path d="M0 0h10L5 6.500z" fill="#333" /></svg>
      </div>
      <span className="-mt-px ml-[4px] mr-[6px] font-bold text-[#444]">{children}</span>
      <div className="-mt-[3px] h-px flex-1 bg-[#dcdcdc]" />
    </div>
  );
}

const TREE = [
  { t: "shapefiles", pad: "pl-[5px]", open: true },
  { t: "validation_polygons", pad: "pl-[23px]" },
  { t: "training_polygons", pad: "pl-[23px]" },
  { t: "aoi_all", pad: "pl-[23px]" },
  { t: "aoi_single", pad: "pl-[23px]" },
];

const Btn = ({ children, off = false }: { children: ReactNode; off?: boolean }) => (
  <div className={`flex h-[22px] w-[23px] items-center justify-center border ${off ? "border-[#c9c9c9] bg-[#cbcbcb]" : "border-[#b5b5b5] bg-[#e0e0e0]"}`}>{children}</div>
);

function Docks() {
  return (
    <div className="flex w-[351px] shrink-0 flex-col bg-[#efefef]">
      <div className="flex h-[18px] items-end border-b border-[#b5b5b5]">
        <div className="flex h-[18px] w-[46px] items-center justify-center border-x border-[#ddd] bg-white pt-[2px]">Items</div>
        <div className="flex h-[16px] w-[75px] items-center justify-center border-r border-t border-[#d9d9d9] pt-[2px]">Undo History</div>
      </div>
      <div className="h-[2px]" />
      <DockHeader title="Items" />
      <div className="mt-[2px] h-[216px] border border-[#8d8f98] bg-white">
        <div className="flex h-[21px] items-center">
          <div className="flex h-full w-[31px] items-center border-r border-[#e3e3e3] pl-[4px]"><svg width="14" height="10" viewBox="0 0 14 10"><path d="M1 5.500C4 1 10 1 13 5.500 10 9 4 9 1 5.500z" fill="#eee" stroke="#999" /><circle cx="7" cy="5" r="2.500" fill="#777" /><path d="M1 3C4 0 10 0 13 3" stroke="#bbb" fill="none" /></svg></div>
          <div className="flex h-full w-[33px] items-center border-r border-[#e3e3e3] pl-[6px]"><svg width="12" height="14" viewBox="0 0 12 14"><path d="M2.500 7V4c0-4 7-4 7 0v3" fill="none" stroke="#888" strokeWidth="1.500" /><rect x="1" y="6.500" width="10" height="7" rx="1" fill="#666" /></svg></div>
          <span className="-mt-px pl-[3px]">Item</span>
        </div>
        <div className="flex h-[18px] items-center pl-[2px] pt-[1px]">
          <Check on /><div className="w-[19px]" /><Check />
          <svg width="14" height="13" viewBox="0 0 14 13" className="ml-[21px] mr-[6px]"><path d="M1 1h3v3H1zM1 5.500h3v3H1zM1 10h3v2H1z" fill="none" stroke="#666" /><path d="M6 2h5M6 6.500h7M6 11h3" stroke="#999" /></svg>
          <span className="-mt-[6px] text-[9.800px] font-bold text-black">&lt;Legend&gt;</span>
        </div>
        <div className="flex h-[18px] items-center pl-[2px] pt-[1px]">
          <Check on /><div className="w-[19px]" /><Check />
          <div className="ml-[21px] mr-[4px]"><MapGlyph /></div>
          <span className="-mt-[5px]">Map 1</span>
        </div>
      </div>
      <div className="mt-[3px] flex h-[19px] items-end border-b border-[#b5b5b5] pl-[2px]">
        <div className="flex h-[17px] w-[47px] items-center justify-center border-l border-t border-[#d9d9d9] pt-[2px]">Layout</div>
        <div className="flex h-[19px] w-[91px] items-center justify-center border-x border-t border-[#ddd] bg-white pt-px">Item Properties</div>
        <div className="flex h-[17px] w-[48px] items-center justify-center border-r border-t border-[#d9d9d9] pt-[2px]">Guides</div>
      </div>
      <div className="h-px" />
      <DockHeader title="Item Properties" />
      <div className="mt-px flex h-[16px] items-center bg-[#c5c5c5] pl-[4px] pt-px text-[10px] font-bold text-black">Legend</div>
      <div className="flex h-[500px] border border-[#8d8f98]">
        <div className="flex-1 pl-[10px] pr-[11px] pt-[11px]">
          <GroupTitle>Main properties</GroupTitle>
          <div className="h-[136px] border-x border-b border-[#dcdcdc] pl-[9px]">
            <div className="flex h-[29px] items-end">
              <span className="w-[68px] pb-[2px]">Title</span>
              <div className="h-[18px] w-[189px] border border-[#7a7a7a] bg-white" />
              <svg width="26" height="20" viewBox="0 0 26 20" fill="none" className="ml-[8px]"><path d="M1 9l5-6v13z" fill="#888" /><path d="M6 2h13v15H6M6 9.500h13" stroke="#888" strokeWidth="1.300" fill="#eee" /><path d="M9 6h8M9 13h6" stroke="#888" strokeWidth="1.500" /><path d="M17 14h8l-4 4z" fill="#000" /></svg>
            </div>
            <div className="mt-[10px] flex items-center"><span className="w-[68px] whitespace-nowrap pt-px text-[9.500px]">Title alignment</span><Combo h="h-[18px]">Left</Combo></div>
            <div className="mt-[5px] flex items-center"><span className="w-[68px] pt-px">Map</span><Combo h="h-[20px]"><MapGlyph /><span className="ml-[3px] pt-px">Map 1</span></Combo></div>
            <div className="mt-[5px] flex items-center"><span className="w-[68px] pt-px">Wrap text on</span><div className="h-[19px] w-[225px] border border-[#7a7a7a] bg-white" /></div>
            <div className="mt-[6px] flex items-center gap-[4px]"><Check on />Resize to fit contents</div>
          </div>
          <div className="h-[7px]" />
          <GroupTitle focus>Legend items</GroupTitle>
          <div className="h-[315px] border-x border-b border-[#dcdcdc] pl-[9px]">
            <div className="flex h-[31px] items-center gap-[4px] pr-[10px]"><Check /><span className="mr-auto">Auto update</span>
              <div className="flex h-[15px] w-[53px] items-center justify-center border border-[#adadad] bg-[#e1e1e1]">Update all</div>
            </div>
            <div className="h-[225px] w-[293px] border border-[#8d8f98] bg-white">
              {TREE.map((n) => (
                <div key={n.t} className={`flex h-[18px] items-center ${n.pad}`}>
                  {n.open ? <Chev /> : <svg width="9" height="9" viewBox="0 0 9 9"><path d="M3 1l3.500 3.500L3 8" fill="none" stroke="#999" strokeWidth="1.300" /></svg>}
                  <div className="ml-[6px] mr-[6px]"><Layers /></div>{n.t}
                </div>
              ))}
              <div className="flex h-[18px] items-center pl-[5px]">
                <svg width="9" height="9" viewBox="0 0 9 9"><path d="M3 1l3.500 3.500L3 8" fill="none" stroke="#999" strokeWidth="1.300" /></svg>
                <svg width="15" height="14" viewBox="0 0 15 14" className="ml-[6px] mr-[6px]"><rect width="15" height="14" fill="#6f98c8" /><path d="M0 0h5v5H0zM10 0h5v4h-5zM5 5h5v4H5zM0 10h5v4H0z" fill="#263a52" /><path d="M10 9h5v5h-5z" fill="#fff" /></svg>
                <span className="text-[10.200px] font-bold text-black">rf_nt250</span>
              </div>
            </div>
            <div className="mt-[6px] flex gap-[4px]">
              <Btn><Svg s={18}><path d="M1 4h22L12 20z" fill="#6b98c6" stroke="#3d5f86" /></Svg></Btn>
              <Btn><Svg s={18}><path d="M1 20h22L12 4z" fill="#6b98c6" stroke="#3d5f86" /></Svg></Btn>
              <Btn><Layers s={18} plus /></Btn>
              <Btn><Svg s={18}><path d="M8 1h8v7h7v8h-7v7H8v-7H1V8h7z" fill="#fff" stroke="#58a058" strokeWidth="1.500" /><path d="M12 4v16M4 12h16" stroke="#58a058" strokeWidth="3" /></Svg></Btn>
              <Btn><Svg s={18}><path d="M1 8h22v8H1z" fill="#fff" stroke="#ef6a6a" strokeWidth="1.500" /><path d="M4 12h16" stroke="#ef5a5a" strokeWidth="3.500" /></Svg></Btn>
              <Btn><Svg s={18}><path d="M2 1h14l4 4v18H2z" fill="#fff" stroke="#bbb" /><path d="M9 19L19 4l4 2-10 15-4 2z" fill="#e5c443" stroke="#a58a2a" /></Svg></Btn>
              <Btn off><Svg s={18}><path d="M20 7V3H4l9 9-9 9h16v-4" stroke="#888" strokeWidth="3" /></Svg></Btn>
              <Btn><Svg s={18}><path d="M1 6h22l-8 8v9H9v-9z" fill="#6b98c6" stroke="#3d5f86" /><path d="M1 2h22v4H1z" fill="#f5dc3a" /></Svg></Btn>
              <div className="flex h-[22px] w-[34px] items-center justify-between border border-[#c9c9c9] bg-[#cbcbcb] pl-[3px] pr-[2px]">
                <Svg s={17}><path d="M13 4C8 1 3 4 4 7c1 2 3 3 6 3-4 0-8 1-7 5 1 3 7 4 10 1" stroke="#888" strokeWidth="2.200" /><path d="M12 14h11l-4 4v5h-3v-5z" fill="#eee" /></Svg>
                <div className="h-[18px] w-px bg-[#eee]" />
                <svg width="6" height="4" viewBox="0 0 6 4"><path d="M0 0h6L3 4z" fill="#f5f5f5" /></svg>
              </div>
            </div>
            <div className="mt-[7px] flex items-center gap-[4px] whitespace-nowrap text-[9.500px]"><Check on />Only show items inside current atlas feature</div>
          </div>
        </div>
        <div className="flex w-[15px] flex-col items-center border-l border-[#f5f5f5] py-[5px]">
          <Chev up />
          <div className="mt-[4px] h-[230px] w-[13px] bg-[#cdcdcd]" />
          <div className="mt-auto"><Chev /></div>
        </div>
      </div>
    </div>
  );
}

/* ---------- task bar ---------- */

type Task = { icon: ReactNode; run?: boolean; active?: boolean };
const Office = ({ c, l }: { c: string; l: string }) => (
  <g><rect x="12" y="4" width="11" height="16" fill="#fff" /><path d="M14 7h8M14 10h8M14 13h8M14 16h8" stroke={c} strokeWidth="1.300" /><path d="M1 4l13-3v22L1 20z" fill={c} /><text x="3" y="16" fontSize="12" fontWeight="bold" fill="#fff">{l}</text></g>
);
const TASKS: Task[] = [
  { icon: <path d="M4 5.500l7-1v7H4zM12 4.300l8.500-1.300v8.500H12zM4 12.500h7v7l-7-1zM12 12.500h8.500V21L12 19.800z" fill="#fff" /> },
  { icon: <g stroke="#eee" strokeWidth="1.600"><circle cx="14" cy="9" r="5.500" /><path d="M10 13l-6 7" /></g> },
  { icon: <g stroke="#ddd" strokeWidth="1.400"><rect x="5" y="8.500" width="10" height="7" /><path d="M4 4v2h12V4M4 20v-2h12v2M19.500 4v16" /><path d="M18.500 9h2.500" strokeWidth="3" /></g> },
  { icon: <g><path d="M1 4h8l1 2h13v14H1z" fill="#fbdf87" /><path d="M1 4h8l1 2H1z" fill="#e0a32b" /><path d="M5 20v-6h14v6h-4v-3h-6v3z" fill="#38b1e5" /></g>, run: true },
  { icon: <g><rect x="1" y="1" width="22" height="22" rx="2" fill="#1d44c4" /><rect x="8" y="1" width="8" height="8" fill="#ddd" /><rect x="12" y="2" width="2.500" height="5" fill="#1d44c4" /><rect x="4" y="11" width="16" height="12" fill="#fbeef0" /><path d="M6 14h12M6 17h12" stroke="#ec9aa5" /></g> },
  { icon: <g><circle cx="12" cy="12" r="11" fill="#fbc116" /><path d="M2.500 6.500A11 11 0 0 1 21.500 6.500H12L7 13z" fill="#e33b2e" /><path d="M2.500 6.500L8 15l4 2-2 6A11 11 0 0 1 2.500 6.500z" fill="#34a350" /><circle cx="12" cy="12" r="5" fill="#4a8af4" stroke="#fff" strokeWidth="1.200" /></g>, run: true },
  { icon: <g><rect x="3" y="2" width="16" height="20" fill="#f4f8ee" /><path d="M3 14c5-2 11-2 16 0v8H3z" fill="#65c22b" /><path d="M7 7v7M7 9.500h4M12 9.500h3" stroke="#444" strokeWidth="1.500" /><path d="M14 16L21.500 4" stroke="#e99023" strokeWidth="2.500" /></g>, run: true },
  { icon: <g><path d="M12 1.500a10.500 10.500 0 1 0 4.500 20l-3-4.200A6 6 0 1 1 18 12l4 4A10.500 10.500 0 0 0 12 1.500z" fill="#8aab25" /><path d="M11 10h4l8 9-2 3h-3z" fill="#93bb4a" /><path d="M10.500 9.500h4.500l3 3.500-3.500 2.500z" fill="#ee7913" /></g>, run: true, active: true },
  { icon: <g><circle cx="12" cy="12" r="11" fill="#1ed35f" /><path d="M5 8.500c5-1.500 10-1 14 1.200M6 12.500c4-1.200 8-.7 11.500 1.200M7 16c3-.8 6-.5 9 1" stroke="#0a0a0a" strokeWidth="1.900" /></g> },
  { icon: <g><circle cx="12" cy="12" r="11" fill="#3d7fc9" /><circle cx="12" cy="8" r="8" fill="#6da8e2" opacity=".7" /><text x="7" y="17" fontSize="14" fontWeight="bold" fontFamily="Liberation Serif" fill="#fff">R</text></g> },
  { icon: <g><path d="M12 1l5 5-5 5-5-5z" fill="#f08070" /><path d="M6 7l5 5-5 5-5-5z" fill="#8ab4f4" /><path d="M18 7l5 5-5 5-5-5z" fill="#9cd468" /><path d="M12 13l5 5-5 5-5-5z" fill="#fbdf6a" /><path d="M12 7v11M12 11l4 2M8 8l4 4" stroke="#111" strokeWidth="2" /></g>, run: true },
  { icon: <g><rect x="0" y="1" width="22" height="22" fill="#e44332" /><path d="M1 7l4 2.500L14 5M1 12l4 2.500L14 10M1 17l4 2.500L14 15" stroke="#fff" strokeWidth="1.800" /></g> },
  { icon: <g><rect x="4" y="2" width="15" height="20" fill="#c98b33" /><rect x="4" y="2" width="3" height="20" fill="#4a341a" /></g> },
  { icon: <g><rect x="2.500" y="2.500" width="19" height="18" fill="#2a0505" stroke="#e0150c" strokeWidth="1.500" /><path d="M11.500 5.500c2 4-2 9-5 11-2 1-1.500-1 1-2 3-1.500 7-2 9.500-1.500 2 .5.5 1.500-1 1-3-1-5-5-5-8.500" stroke="#fff" strokeWidth="1.200" /></g> },
  { icon: <Office c="#1d7145" l="X" />, run: true },
  { icon: <Office c="#2a5699" l="W" />, run: true },
  { icon: <g><rect x="1" y="1" width="22" height="22" fill="#0e78d6" /><circle cx="12" cy="12" r="9" fill="#fff" /><path d="M3.500 12l5-4v3h7V8l5 4-5 4v-3h-7v3z" fill="#0e6ac4" /></g>, run: true },
  { icon: <g><path d="M12 1c2 5 8 8 8 14a8 8 0 0 1-16 0c0-5 6-9 8-14z" fill="#c63d9b" /><path d="M12 1c2 3 4 6 6 8-4 1-6-2-8-4z" fill="#f9a51c" /><path d="M4 14c5-3 8 4 16 2a8 8 0 0 1-16-1z" fill="#2aa3e8" /></g>, run: true },
  { icon: <g><circle cx="12" cy="12" r="5.500" stroke="#fff" strokeWidth="3" /><path d="M12 3.500v3M12 17.500v3M3.500 12h3M17.500 12h3M6 6l2 2M16 16l2 2M18 6l-2 2M6 18l2-2" stroke="#fff" strokeWidth="3" /></g>, run: true },
  { icon: <g><rect x="1.500" y="4.500" width="21" height="16" fill="#3a3f42" stroke="#8a8f92" strokeWidth="1.500" /><path d="M4 8l2 1.500L4 11M7 11h4" stroke="#aaa" /></g>, run: true },
  { icon: <g><path d="M2 6l5-3 3 4 4-5 2 5-2 3 7-1 1 3-7 2 6 4-1 3-6-4-3 4-4-1 1-5-6 2-1-3 6-3z" fill="#a81512" /><circle cx="5" cy="5" r="2" fill="#ddd" /><text x="9" y="15" fontSize="7" fontWeight="bold" fill="#ffd94a">64</text></g>, run: true },
];

function TaskBar() {
  return (
    <div className="flex h-[36px] bg-[#080808]">
      {TASKS.map((t, i) => (
        <div key={i} className="relative flex w-[44.05px] shrink-0 flex-col items-center">
          <div className={`flex w-[41px] items-center justify-center ${t.active ? "mt-[6px] h-[28px] bg-[#3b3b3b] pb-[5px]" : "h-[34px] pt-[2px]"}`}><Svg s={22}>{t.icon}</Svg></div>
          {t.run && <div className={`h-[2px] bg-[#76b0e2] ${t.active ? "w-[41px]" : "w-[36px]"}`} />}
          {i === 11 && <div className="absolute left-[25px] top-[16px] flex size-[16px] items-center justify-center rounded-full border border-[#888] bg-[#2d2d2d] font-['Open_Sans',sans-serif] text-[10px] font-semibold text-white [font-stretch:normal]">13</div>}
        </div>
      ))}
      <div className="ml-auto flex w-[29px] items-center justify-center bg-[#222]"><Svg s={17}><path d="M7 12c-4-2-7 3-5 5s6-1 7-5l4-8c2-4 5-2 3 1l-5 11c-2 5-6 6-6 4s5-7 10-8 6 1 4 3-4 0 0-3" stroke="#eee" strokeWidth="1.600" /></Svg></div>
      <div className="flex w-[59px] flex-col items-center justify-center font-['Open_Sans',sans-serif] text-[9.300px] leading-[16px] text-white [font-stretch:normal]"><span>18:59</span><span>08.06.2020</span></div>
    </div>
  );
}

/* ---------- window ---------- */

const MENUS = ["Layout", "Edit", "View", "Items", "Add Item", "Atlas", "Settings"];

export default function App() {
  return (
    <div className="flex h-[972px] w-[1728px] flex-col overflow-hidden bg-[#efefef] font-['DejaVu_Sans_Condensed','DejaVu_Sans',sans-serif] text-[9.600px] leading-[13px] text-[#222] [font-stretch:condensed]">
      <div className="flex h-[20px] shrink-0 items-center bg-white pl-[2px]">
        <QLogo s={15} />
        <span className="ml-[4px] mt-px font-['Open_Sans',sans-serif] text-[10.400px] text-[#999] [font-stretch:normal]">*map_randomForest</span>
        <svg width="96" height="12" viewBox="0 0 96 12" fill="none" stroke="#777" className="ml-auto mr-[16px]"><path d="M3 6.500h9M44.500 4.500h6v6h-6zM46.500 4V2.500h6v6h-1.500M85.500 2l8 8M93.500 2l-8 8" /></svg>
      </div>
      <div className="flex h-[18px] shrink-0 items-center gap-[14.100px] border-b border-[#e5e5e5] bg-white pl-[6px] pt-[3px] text-[9.600px] text-black">
        {MENUS.map((m) => (
          <span key={m}>{m === "Atlas" || m === "Settings" ? m : <><u>{m[0]}</u>{m.slice(1)}</>}</span>
        ))}
      </div>
      <FileTools />
      <ViewTools />
      <div className="flex h-[813px] shrink-0 border-t border-white">
        <div className="flex w-[30px] shrink-0 flex-col">
          <div className="mx-[4px] mb-[4px] mt-[3px] border-t-2 border-dotted border-[#c4c4c4]" />
          {SIDE.map((g, i) => (
            <div key={i} className={`ml-[2px] flex h-[27px] w-[28px] shrink-0 items-center justify-center ${i === 2 ? "border border-[#90c8f0] bg-[#bfdcf2]" : ""}`}><Svg s={21}>{g}</Svg></div>
          ))}
        </div>
        <div className="flex w-[1341px] shrink-0 flex-col border-l-2 border-[#d0d0d0]">
          <RulerTop />
          <div className="flex h-[795px]">
            <RulerSide />
            <div className="relative w-[1309px] shrink-0 overflow-hidden border-b border-[#a0a0a8] bg-[#d7d7d7]">
              <div className="absolute left-[136px] top-[20px] h-[738px] w-[1045px] bg-[#939393]" />
              <div className="absolute left-[131px] top-[15px] h-[738px] w-[1045px] bg-white" />
              <CoverMap />
              <LegendBox />
            </div>
            <div className="flex w-[15px] flex-col items-center py-[5px]">
              <Chev up />
              <div className="mt-[38px] h-[719px] w-[14px] bg-[#cdcdcd]" />
              <div className="mt-auto"><Chev /></div>
            </div>
          </div>
        </div>
        <div className="w-[6px] shrink-0" />
        <Docks />
      </div>
      <div className="flex h-[25px] shrink-0 items-center pl-[6px] pt-px">
        <span>1 item selected</span>
        <span className="ml-auto w-[96px] whitespace-nowrap">x: 305.972 mm</span>
        <span className="w-[94px] whitespace-nowrap">y: 216.176 mm</span>
        <span className="w-[97px]">page: 1</span>
        <div className="flex h-[20px] w-[106px] items-center justify-between border border-[#8a8a8a] bg-white px-[5px]">103.4%<Chev /></div>
        <div className="ml-[5px] flex w-[91px] items-center">
          <div className="h-[3px] w-[8px] border border-[#d2d2d2]" />
          <div className="h-[19px] w-[9px] bg-[#0078d7]" />
          <div className="h-[3px] flex-1 border border-[#d2d2d2]" />
        </div>
      </div>
      <TaskBar />
    </div>
  );
}
